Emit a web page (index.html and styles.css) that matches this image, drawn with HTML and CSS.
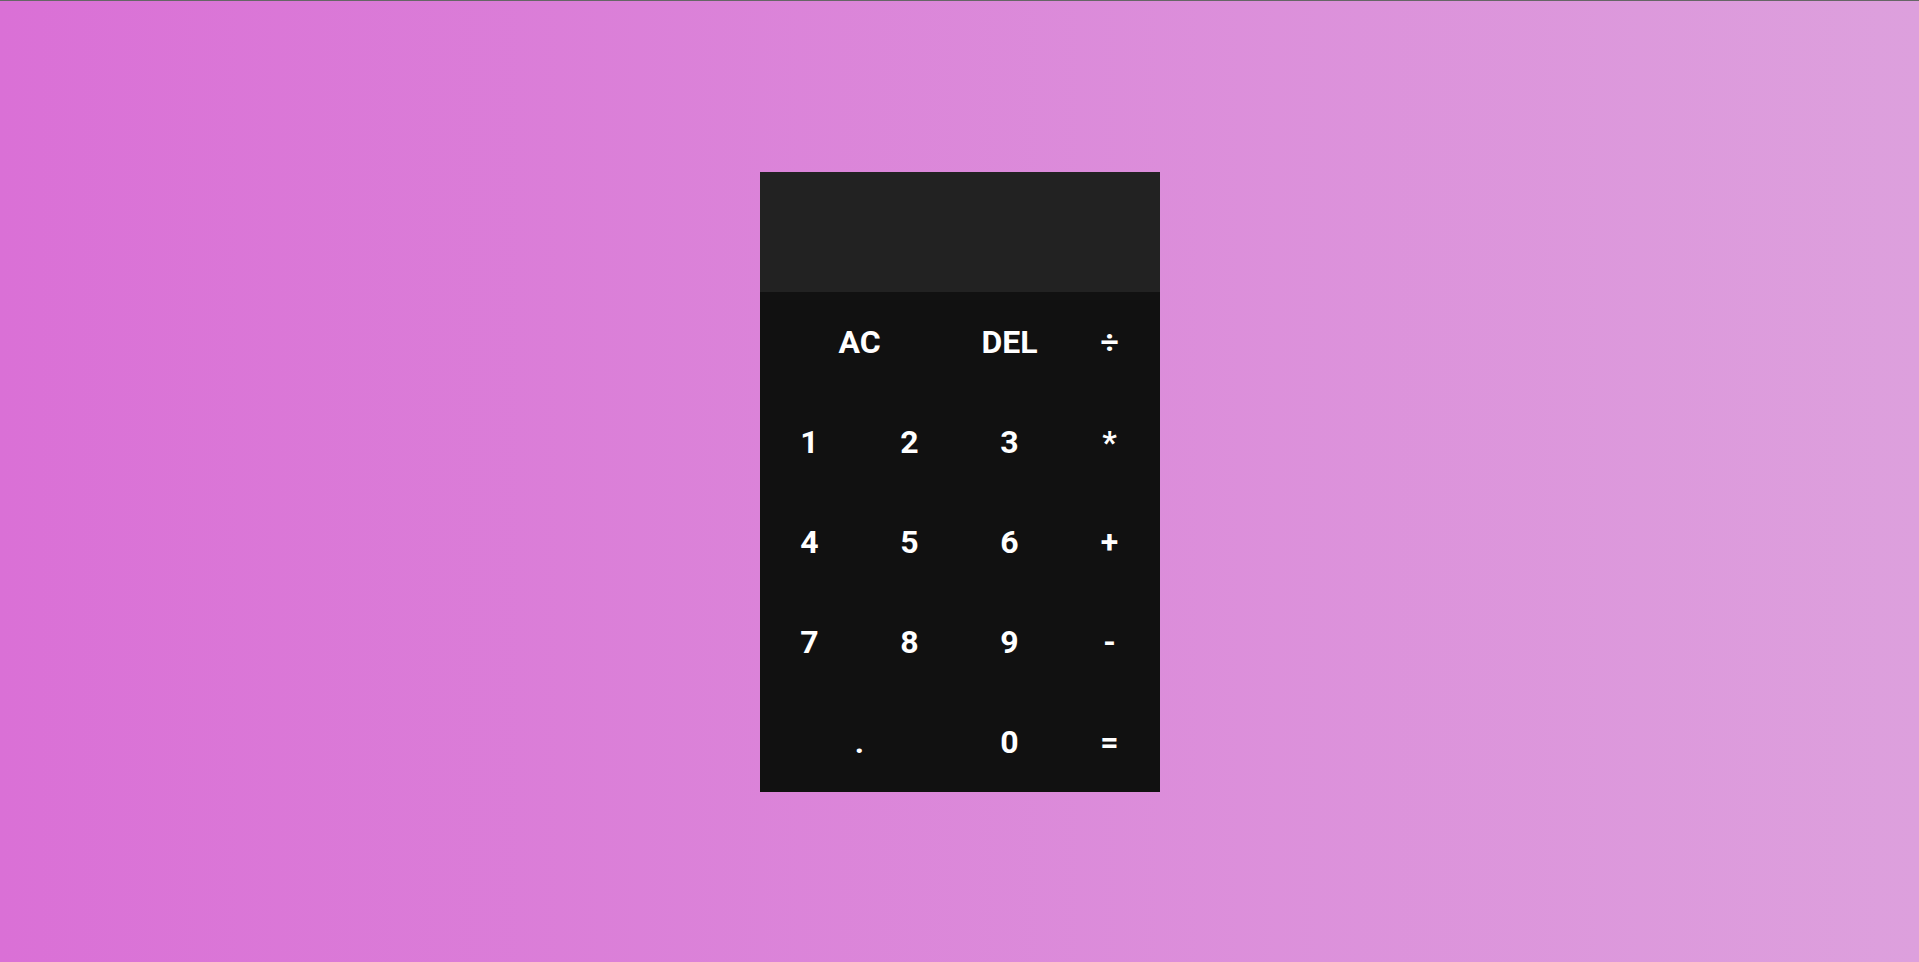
FILE: index.html
```html
<!DOCTYPE html>
<html lang="en">
<head>
<meta charset="utf-8">
<title>Calculator</title>
<link rel="stylesheet" href="styles.css">
</head>
<body>
<div class="page">
  <div class="calculator">
    <div class="output">
      <div class="previous"></div>
      <div class="current"></div>
    </div>
    <button class="key span-two">AC</button>
    <button class="key">DEL</button>
    <button class="key">÷</button>
    <button class="key">1</button>
    <button class="key">2</button>
    <button class="key">3</button>
    <button class="key">*</button>
    <button class="key">4</button>
    <button class="key">5</button>
    <button class="key">6</button>
    <button class="key">+</button>
    <button class="key">7</button>
    <button class="key">8</button>
    <button class="key">9</button>
    <button class="key">-</button>
    <button class="key span-two">.</button>
    <button class="key">0</button>
    <button class="key">=</button>
  </div>
</div>
</body>
</html>
```
FILE: styles.css
```css
* {
  box-sizing: border-box;
}
html, body {
  margin: 0;
  padding: 0;
  height: 100%;
}
body {
  border-top: 1px solid #666;
  background: linear-gradient(to right, #da70d6, #dda0dd);
  font-family: Roboto, "Liberation Sans", sans-serif;
}
.page {
  height: 961px;
  display: flex;
  justify-content: center;
  align-items: center;
}
.calculator {
  display: grid;
  grid-template-columns: repeat(4, 100px);
  grid-template-rows: 120px repeat(5, 100px);
  background: #111;
}
.output {
  grid-column: 1 / -1;
  background: #222;
}
.key {
  border: none;
  background: transparent;
  color: #fff;
  font-family: Roboto, "Liberation Sans", sans-serif;
  font-weight: 700;
  font-size: 32px;
  padding: 0;
  cursor: pointer;
}
.span-two {
  grid-column: span 2;
}
```
